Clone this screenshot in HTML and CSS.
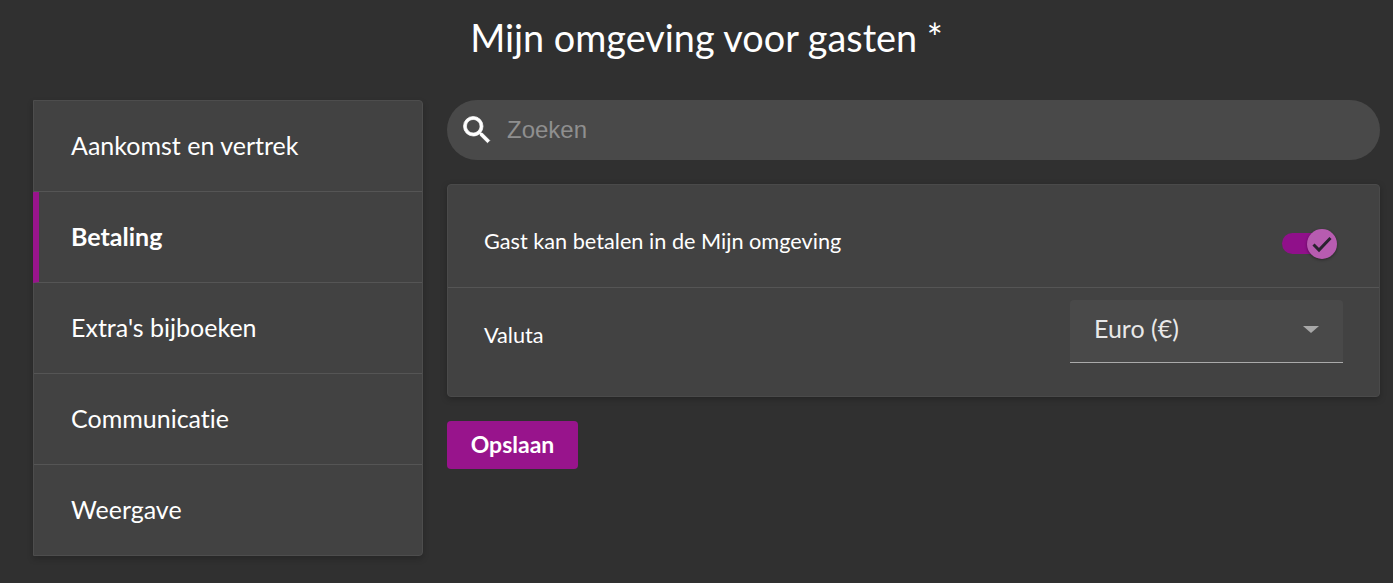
FILE: index.html
```html
<!DOCTYPE html>
<html lang="nl">
<head>
<meta charset="utf-8">
<title>Mijn omgeving voor gasten</title>
<link rel="stylesheet" href="styles.css">
</head>
<body>
<div class="page">
  <h1 class="title">Mijn omgeving voor gasten *</h1>
  <div class="columns">
    <nav class="side">
      <a class="side-item">Aankomst en vertrek</a>
      <a class="side-item active">Betaling</a>
      <a class="side-item">Extra's bijboeken</a>
      <a class="side-item">Communicatie</a>
      <a class="side-item">Weergave</a>
    </nav>
    <main class="main">
      <div class="search">
        <svg class="search-icon" viewBox="0 0 24 24" width="36" height="36"><path fill="#fff" stroke="#fff" stroke-width=".5" d="M15.5 14h-.79l-.28-.27A6.47 6.47 0 0 0 16 9.5 6.5 6.5 0 1 0 9.5 16c1.61 0 3.09-.59 4.23-1.57l.27.28v.79l5 4.99L20.49 19l-4.99-5zm-6 0C7.01 14 5 11.99 5 9.5S7.01 5 9.5 5 14 7.01 14 9.5 11.99 14 9.5 14z"/></svg>
        <span class="search-text">Zoeken</span>
      </div>
      <section class="card">
        <div class="row row-top">
          <span class="label">Gast kan betalen in de Mijn omgeving</span>
          <span class="switch">
            <span class="track"></span>
            <span class="thumb">
              <svg viewBox="0 0 30 30" width="30" height="30"><path fill="none" stroke="#2a2330" stroke-width="3" d="M6.500 15.500l5.500 5.500 11.500-12"/></svg>
            </span>
          </span>
        </div>
        <div class="row row-bottom">
          <span class="label">Valuta</span>
          <div class="select">
            <span class="select-value">Euro (€)</span>
            <span class="caret"></span>
          </div>
        </div>
      </section>
      <button class="save">Opslaan</button>
    </main>
  </div>
</div>
</body>
</html>
```
FILE: styles.css
```css
* { box-sizing: border-box; }
html, body { margin: 0; height: 100%; }
body {
  background: #303030;
  color: #fff;
  font-family: Lato, "Noto Sans", sans-serif;
  font-variant-ligatures: none;
  overflow: hidden;
}
.page { padding: 0 13px 0 33px; }
.title {
  margin: 0;
  height: 100px;
  padding-top: 13px;
  text-align: center;
  font-size: 37.8px;
  line-height: 50px;
  font-weight: 400;
}
.columns { display: flex; gap: 24px; align-items: flex-start; }
.side {
  width: 390px;
  flex: none;
  display: flex;
  flex-direction: column;
  background: #424242;
  border: 1px solid #4d4d4d;
  border-radius: 0 4px 4px 0;
  box-shadow: 0 3px 6px rgba(0,0,0,.2);
}
.side-item {
  height: 91px;
  display: flex;
  align-items: center;
  padding: 0 0 2px 37px;
  font-size: 25px;
  border-bottom: 1px solid #555;
  color: #fff;
}
.side-item:last-child { border-bottom: 0; height: 90px; }
.side-item.active {
  font-weight: 700;
  border-left: 6px solid #98148c;
  margin-left: -1px;
  padding-left: 32px;
}
.main { flex: 1; min-width: 0; }
.search {
  height: 60px;
  border-radius: 30px;
  background: #494949;
  display: flex;
  align-items: center;
  padding-left: 12px;
  gap: 12px;
}
.search-text {
  font-family: "Liberation Sans", Arial, sans-serif;
  font-size: 24px;
  color: #8f8f8f;
}
.card {
  margin-top: 24px;
  background: #424242;
  border: 1px solid #4a4a4a;
  border-radius: 4px;
  box-shadow: 0 2px 6px rgba(0,0,0,.25);
}
.row {
  display: flex;
  align-items: center;
  justify-content: space-between;
  padding: 0 36px;
}
.row-top { height: 103px; border-bottom: 1px solid #555; padding: 8px 42px 0 36px; }
.row-bottom { height: 108px; padding-right: 36px; padding-bottom: 16px; }
.label { font-size: 21.7px; margin-top: 2px; }
.switch { position: relative; width: 55px; height: 30px; display: block; margin-top: 8px; }
.track {
  position: absolute;
  left: 0; top: 4px;
  width: 40px; height: 21px;
  border-radius: 11px;
  background: #90108a;
}
.thumb {
  position: absolute;
  right: 0; top: 0;
  width: 30px; height: 30px;
  border-radius: 50%;
  background: #b75cb0;
  box-shadow: 0 1px 3px rgba(0,0,0,.4);
  display: flex;
  align-items: center;
  justify-content: center;
}
.select {
  width: 273px;
  height: 63px;
  margin-top: -6px;
  background: #494949;
  border-bottom: 1px solid #aaa;
  border-radius: 4px 4px 0 0;
  display: flex;
  align-items: center;
  justify-content: space-between;
  padding: 0 24px 6px 24px;
}
.select-value { font-size: 25px; color: #e8e8e8; }
.caret {
  width: 0; height: 0;
  margin-top: 4px;
  border-left: 8px solid transparent;
  border-right: 8px solid transparent;
  border-top: 7px solid #a8a8a8;
}
.save {
  display: block;
  margin-top: 24px;
  width: 131px;
  height: 48px;
  border: 0;
  border-radius: 4px;
  background: #98148c;
  color: #fff;
  font-family: inherit;
  font-size: 23px;
  font-weight: 700;
  padding-bottom: 3px;
}
```
